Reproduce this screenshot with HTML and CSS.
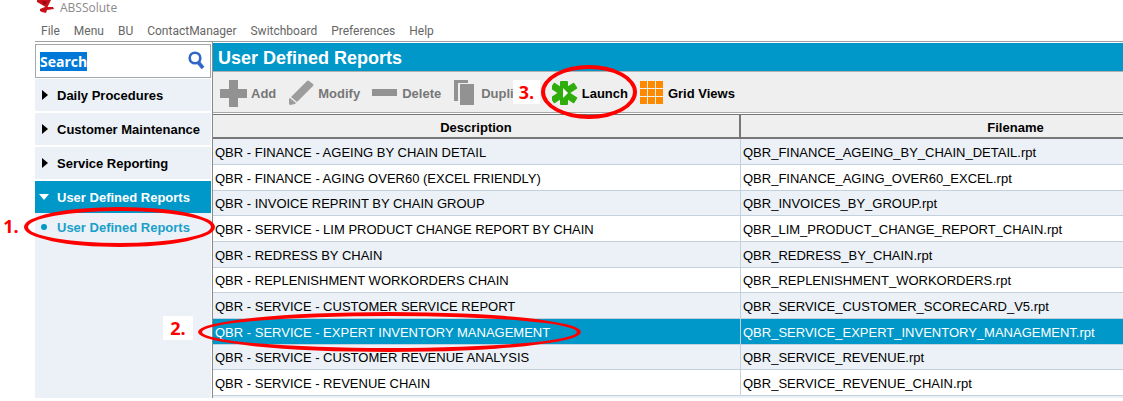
FILE: index.html
```html
<!DOCTYPE html>
<html lang="en">

<head>
	<meta charset="UTF-8">
	<meta name="viewport" content="width=device-width, initial-scale=1.0">
	<title>ABSSolute</title>
	<link rel="stylesheet" href="styles.css">
</head>

<body>
	<div class="app">
		<header class="titlebar">
			<svg class="logo" width="20" height="14" viewBox="0 0 20 14">
				<path d="M2 0h14l-2 4-2 4-3-2-7-4z" fill="#c8101a" />
				<path d="M5 9l5-2 8 0 1 2-7 1-1 3-4-1-2-1z" fill="#c8101a" />
				<path d="M7 1l5 1-3 3z" fill="#8e0a12" />
			</svg>
			<span>ABSSolute</span>
		</header>

		<nav class="menubar">
			<a href="#">File</a>
			<a href="#">Menu</a>
			<a href="#">BU</a>
			<a href="#">ContactManager</a>
			<a href="#">Switchboard</a>
			<a href="#">Preferences</a>
			<a href="#">Help</a>
		</nav>

		<div class="workspace">
			<aside class="sidebar">
				<form class="search">
					<input type="text" id="search" class="search-input" value="Search" aria-label="Search">
					<button type="button" class="search-btn" aria-label="Find">
						<svg width="18" height="20" viewBox="0 0 18 20" fill="none" stroke="#2f66c8">
							<circle cx="7" cy="7" r="5.3" stroke-width="2.6" />
							<path d="M10 11l5 6" stroke-width="3.6" />
						</svg>
					</button>
				</form>
				<nav class="groups">
					<a class="group" href="#"><span class="arrow"></span>Daily Procedures</a>
					<a class="group" href="#"><span class="arrow"></span>Customer Maintenance</a>
					<a class="group" href="#"><span class="arrow"></span>Service Reporting</a>
					<a class="group open" href="#"><span class="arrow"></span>User Defined Reports</a>
				</nav>
				<div class="subitems">
					<a class="subitem" href="#"><span class="dot"></span>User Defined Reports</a>
				</div>
			</aside>

			<main class="content">
				<h1 class="heading">User Defined Reports</h1>

				<div class="toolbar">
					<button class="tool" disabled>
						<svg width="28" height="28" viewBox="0 0 28 28" fill="#929292">
							<path d="M10 1h9v9h9v9h-9v9h-9v-9H1v-9h9z" />
						</svg>Add
					</button>
					<button class="tool" disabled>
						<svg width="26" height="28" viewBox="0 0 26 28" fill="#9c9c9c">
							<path d="M19 2q1-1 2 0l4 3q1 1 0 2L9 23l-6-5z" />
							<path d="M1 20l1-1 6 5-1 1-5 1-1-1z" />
						</svg>Modify
					</button>
					<button class="tool" disabled>
						<svg width="26" height="28" viewBox="0 0 26 28" fill="#929292">
							<path d="M0 10h25v7H0z" />
						</svg>Delete
					</button>
					<button class="tool" disabled>
						<svg width="24" height="28" viewBox="0 0 24 28" fill="#929292">
							<path d="M1 1h14v3H5v18H1z" />
							<path d="M7 5h14v21H7z" />
						</svg>Duplicate
					</button>
					<button class="tool">
						<svg width="26" height="26" viewBox="0 0 26 26" fill="#2fae0b">
							<rect x="8" y="1" width="8" height="24" rx="1" />
							<rect x="8.500" y="-1" width="7" height="28" rx="1" transform="rotate(57 12 13)" />
							<rect x="8.500" y="-1" width="7" height="28" rx="1" transform="rotate(-57 12 13)" />
							<path d="M11 8l5 5-5 5z" fill="#fff" />
						</svg>Launch
					</button>
					<button class="tool">
						<svg width="24" height="24" viewBox="0 0 24 24" fill="#ff8a00">
							<path d="M0 0h7v7H0zM8 0h7v7H8zM16 0h7v7h-7zM0 8h7v7H0zM8 8h7v7H8zM16 8h7v7h-7zM0 16h7v7H0zM8 16h7v7H8zM16 16h7v7h-7z" />
						</svg>Grid Views
					</button>
				</div>

				<div class="table-wrap">
					<table class="reports">
						<colgroup>
							<col class="col-description">
							<col class="col-filename">
						</colgroup>
						<thead>
							<tr><th>Description</th><th>Filename</th></tr>
						</thead>
						<tbody>
							<tr><td>QBR - FINANCE - AGEING BY CHAIN DETAIL</td><td>QBR_FINANCE_AGEING_BY_CHAIN_DETAIL.rpt</td></tr>
							<tr><td>QBR - FINANCE - AGING OVER60 (EXCEL FRIENDLY)</td><td>QBR_FINANCE_AGING_OVER60_EXCEL.rpt</td></tr>
							<tr><td>QBR - INVOICE REPRINT BY CHAIN GROUP</td><td>QBR_INVOICES_BY_GROUP.rpt</td></tr>
							<tr><td>QBR - SERVICE - LIM PRODUCT CHANGE REPORT BY CHAIN</td><td>QBR_LIM_PRODUCT_CHANGE_REPORT_CHAIN.rpt</td></tr>
							<tr><td>QBR - REDRESS BY CHAIN</td><td>QBR_REDRESS_BY_CHAIN.rpt</td></tr>
							<tr><td>QBR - REPLENISHMENT WORKORDERS CHAIN</td><td>QBR_REPLENISHMENT_WORKORDERS.rpt</td></tr>
							<tr><td>QBR - SERVICE - CUSTOMER SERVICE REPORT</td><td>QBR_SERVICE_CUSTOMER_SCORECARD_V5.rpt</td></tr>
							<tr class="selected"><td>QBR - SERVICE - EXPERT INVENTORY MANAGEMENT</td><td>QBR_SERVICE_EXPERT_INVENTORY_MANAGEMENT.rpt</td></tr>
							<tr><td>QBR - SERVICE - CUSTOMER REVENUE ANALYSIS</td><td>QBR_SERVICE_REVENUE.rpt</td></tr>
							<tr><td>QBR - SERVICE - REVENUE CHAIN</td><td>QBR_SERVICE_REVENUE_CHAIN.rpt</td></tr>
						</tbody>
					</table>
				</div>
			</main>
		</div>
	</div>

	<!-- numbered steps drawn over the window -->
	<span class="step step-1">1.</span>
	<span class="step step-2">2.</span>
	<span class="step step-3">3.</span>
	<span class="ring ring-1"></span>
	<span class="ring ring-2"></span>
	<span class="ring ring-3"></span>

	<script>
		const search = document.getElementById('search');
		search.focus();
		search.select();
	</script>
</body>

</html>
```
FILE: styles.css
```css
* {
	margin: 0;
	padding: 0;
	box-sizing: border-box;
}

body {
	position: relative;
	background: #fff;
	font-family: "Liberation Sans", Arial, sans-serif;
	font-size: 13px;
	color: #000;
	overflow: hidden;
}

a {
	color: inherit;
	text-decoration: none;
}

button,
input {
	border: none;
	background: none;
	font: inherit;
}

.app {
	padding-left: 35px;
}

.titlebar {
	display: flex;
	align-items: center;
	gap: 5px;
	height: 15px;
	font-family: "Open Sans", sans-serif;
	font-size: 12px;
	line-height: 15px;
	color: #8a8a8a;
}

.logo {
	align-self: flex-start;
}

.menubar {
	display: flex;
	align-items: center;
	gap: 14px;
	height: 27px;
	padding: 6px 6px 0;
	border-bottom: 1px solid #a0a0a0;
	font-family: Roboto, sans-serif;
	font-size: 12px;
	color: #666;
}

.workspace {
	display: flex;
}

.sidebar {
	display: flex;
	flex-direction: column;
	width: 176px;
	margin-right: 1px;
	padding-top: 2px;
}

.search {
	display: flex;
	align-items: center;
	justify-content: space-between;
	height: 34px;
	padding: 0 4px;
	border: 1px solid #a4a8ac;
}

.search-input {
	width: 130px;
	height: 20px;
	font-family: "Open Sans", sans-serif;
	font-size: 14px;
	font-weight: bold;
	outline: none;
}

.search-input::selection {
	background: #0078d7;
	color: #fff;
}

.search-btn svg {
	display: block;
}

.groups {
	display: flex;
	flex-direction: column;
	gap: 2px;
	padding-top: 1px;
}

.group {
	display: flex;
	align-items: center;
	height: 32px;
	padding-left: 7px;
	background: #ebf1f6;
	font-weight: bold;
	white-space: nowrap;
}

.arrow {
	width: 15px;
}

.arrow::before {
	content: "";
	display: block;
	width: 0;
	border-top: 5px solid transparent;
	border-bottom: 5px solid transparent;
	border-left: 6px solid #000;
}

.group.open {
	padding-left: 4px;
	background: #0097c9;
	color: #fff;
}

.open .arrow {
	width: 18px;
}

.open .arrow::before {
	border-top: 6px solid #fff;
	border-left: 5px solid transparent;
	border-right: 5px solid transparent;
	border-bottom: none;
}

.subitems {
	flex: 1;
	background: #ebf1f6;
}

.subitem {
	display: flex;
	align-items: center;
	height: 28px;
	padding-left: 6px;
	font-weight: bold;
	color: #1a9fcb;
}

.dot {
	width: 6px;
	height: 6px;
	margin-right: 10px;
	border-radius: 50%;
	background: #0097c9;
}

.content {
	flex: 1;
	min-width: 0;
	padding-top: 1px;
	border-left: 1px solid #8a8a8a;
}

.heading {
	height: 28px;
	padding-left: 5px;
	background: #0097c9;
	font-size: 18px;
	line-height: 30px;
	color: #fff;
}

.toolbar {
	display: flex;
	align-items: center;
	gap: 12px;
	height: 42px;
	padding: 2px 6px 0;
	background: #efefef;
	border-top: 1px solid #b0b0b0;
	border-bottom: 1px solid #a8a8a8;
}

.tool {
	display: flex;
	align-items: center;
	gap: 4px;
	font-weight: bold;
	white-space: nowrap;
	color: #000;
}

.tool:disabled {
	color: #777;
}

.table-wrap {
	overflow: hidden;
	margin-top: 1px;
	padding-bottom: 2px;
	border-top: 1px solid #777;
	background: #ebf1f6;
}

.reports {
	width: 1079px;
	table-layout: fixed;
	border-collapse: separate;
	border-spacing: 0;
}

.col-description {
	width: 528px;
}

.reports th {
	height: 24px;
	padding-top: 2px;
	background: #efefef;
	border-right: 2px solid #777;
	border-bottom: 2px solid #777;
	font-size: 13px;
}

.reports td {
	height: 26px;
	padding: 1px 0 0 2px;
	border-right: 1px solid #c3d1de;
	border-bottom: 1px solid #c3d1de;
	background: #fff;
	white-space: nowrap;
}

.reports tr:nth-child(3n) td {
	height: 25px;
}

.reports tr:nth-child(odd) td {
	background: #ebf1f6;
}

.reports .selected td {
	background: #0097c9;
	color: #fff;
}

.step {
	position: absolute;
	font-family: "Open Sans", sans-serif;
	font-size: 18px;
	font-weight: bold;
	line-height: 24px;
	text-align: center;
	color: #f00;
	background: #fff;
}

.step-1 {
	left: 0;
	top: 214px;
	width: 22px;
}

.step-2 {
	left: 163px;
	top: 316px;
	width: 30px;
}

.step-3 {
	left: 513px;
	top: 80px;
	width: 27px;
}

.ring {
	position: absolute;
	border: 4px solid #f00;
	border-radius: 50%;
}

.ring-1 {
	left: 24px;
	top: 207px;
	width: 191px;
	height: 40px;
}

.ring-2 {
	left: 198px;
	top: 312px;
	width: 383px;
	height: 40px;
}

.ring-3 {
	left: 541px;
	top: 65px;
	width: 96px;
	height: 54px;
}
```
